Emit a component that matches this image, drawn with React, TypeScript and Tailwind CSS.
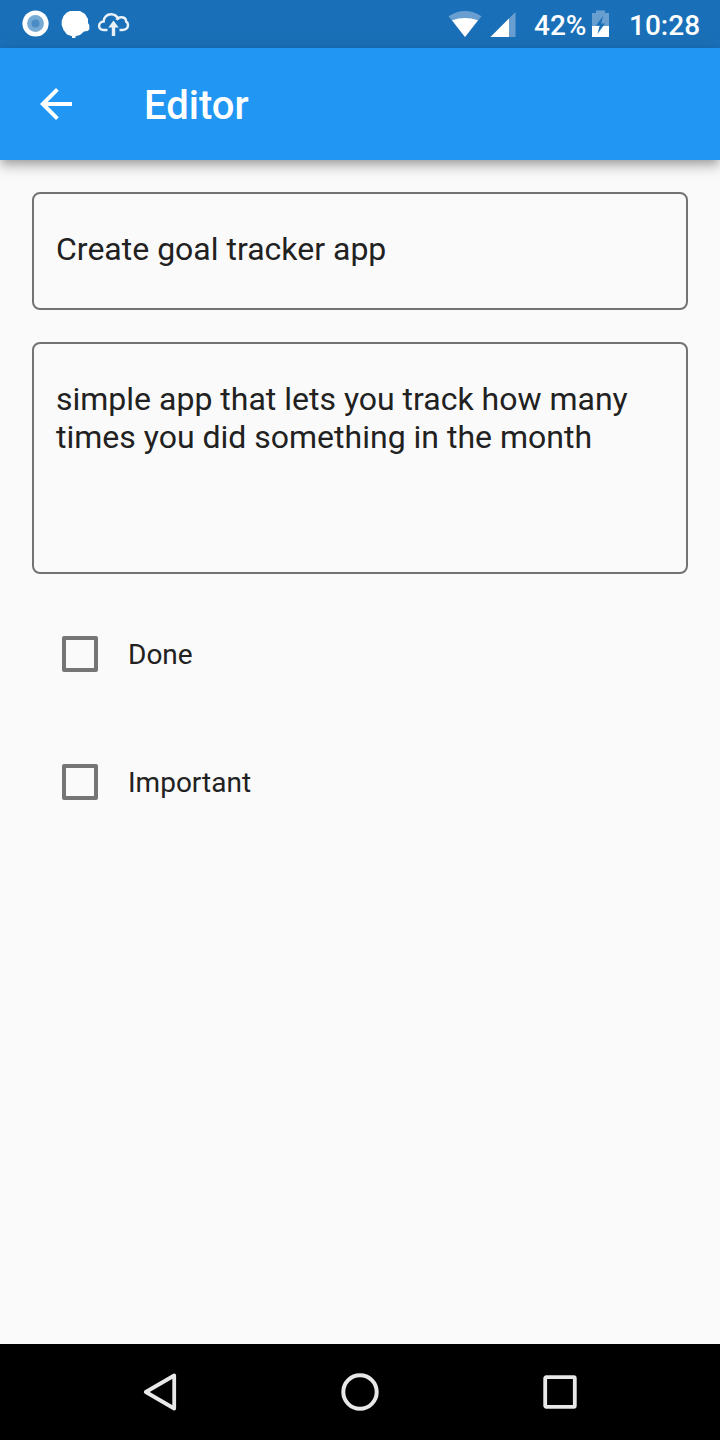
import React, { useState } from "react";

function StatusBar() {
  return (
    <div className="flex h-12 shrink-0 items-center bg-[#1a70b8] text-white">
      <svg className="h-12 w-[140px]" viewBox="0 0 140 48" fill="none">
        <circle cx="35.5" cy="23.5" r="13.1" fill="#fff" />
        <circle cx="35.5" cy="23.5" r="8.4" fill="#76a9d4" />
        <circle cx="35.5" cy="23.5" r="4" fill="#4a8dc6" />
        <path
          d="M70 11H80L85 14L88 19L88 23L89.300 25V29.500L87.500 31L84 31.500L80 35L75.500 36.300V38H72V36.300L67 34.500L63.500 30L61.700 25V21L63.500 16L66.500 12.700Z"
          fill="#fff"
        />
        <path
          d="M107.500 30H103.500C100.900 30 99.100 28.300 99.100 26C99.100 23.500 101.100 21.700 103.600 21.500C103.600 17.500 106.900 14.300 111 14.300C114.500 14.300 117.300 16.500 118.300 19.800M116.500 19.800C117.500 18.200 119.200 17.300 121.200 17.300C124 17.300 126 19 126.200 21.600C127.400 22.300 128 23.500 128 25C128 28 125.600 30 122.500 30H119.500"
          stroke="#e8f0f8"
          strokeWidth="2.500"
        />
        <path d="M113.500 20.500l5.200 7h-3.500V36h-3.400v-8.500h-3.500z" fill="#e8f0f8" />
      </svg>
      <div className="flex-1" />
      <svg className="h-12 w-[90px]" viewBox="440 0 90 48">
        <path d="M448.500 16.200Q465 5.800 481.500 16.200L465 37z" fill="#699fd0" />
        <path d="M452 20.300Q465 15.500 478 20.300L465 37z" fill="#fff" />
        <path d="M515.500 12v25H490.500z" fill="#699fd0" />
        <path d="M509 18.500V37H490.500z" fill="#fff" />
      </svg>
      <span className="mt-1 w-[58px] pl-1 text-[28px] leading-none font-medium">42%</span>
      <svg className="h-12 w-[26px]" viewBox="588 0 26 48">
        <path d="M592 13h4v-2.500h9V13h4v14h-17z" fill="#699fd0" />
        <path d="M592 26h17v11h-17z" fill="#fff" />
        <path d="M603 16l-7 9.500h3.700L597.500 34l7.500-10.500h-3.800z" fill="#1a70b8" />
      </svg>
      <span className="mt-1 w-[106px] pl-[15px] text-[28px] leading-none font-medium">10:28</span>
    </div>
  );
}

function AppBar() {
  return (
    <header className="z-10 flex h-28 shrink-0 items-center bg-[#2196f3] text-white shadow-[0_4px_8px_-2px_rgba(0,0,0,0.2),0_8px_10px_0_rgba(0,0,0,0.14),0_2px_20px_0_rgba(0,0,0,0.12)]">
      <button className="flex w-28 justify-center" aria-label="Back">
        <svg className="size-12" viewBox="0 0 24 24" fill="currentColor">
          <path d="M20 11H7.830l5.590-5.590L12 4l-8 8 8 8 1.410-1.410L7.830 13H20v-2z" />
        </svg>
      </button>
      <h1 className="pt-1 pl-8 text-[40px] leading-[48px] font-medium">Editor</h1>
    </header>
  );
}

function Field({ text, size }: { text: string; size: string }) {
  return (
    <div
      className={`${size} rounded-lg border-2 border-[#737373] px-[22px] pt-9 text-[32px] leading-[38px] whitespace-pre-line`}
    >
      {text}
    </div>
  );
}

function CheckRow({ label }: { label: string }) {
  const [on, setOn] = useState(false);
  return (
    <label className="flex h-32 items-center gap-[30px] pl-[30px]">
      <button
        role="checkbox"
        aria-checked={on}
        aria-label={label}
        onClick={() => setOn(!on)}
        className={`size-9 rounded-[2px] border-4 border-[#757575] ${on ? "bg-[#2196f3]" : ""}`}
      />
      <span className="pt-0.5 text-[28px] leading-8">{label}</span>
    </label>
  );
}

function NavBar() {
  return (
    <nav className="flex h-24 shrink-0 items-center justify-center gap-[152px] bg-black">
      <svg className="size-12" viewBox="0 0 48 48" fill="none" stroke="#e8e8e8" strokeWidth="3.800" strokeLinejoin="round">
        <path d="M9.800 24L38.200 7.500v33z" />
      </svg>
      <svg className="size-12" viewBox="0 0 48 48" fill="none" stroke="#e8e8e8" strokeWidth="4">
        <circle cx="24" cy="24" r="16.700" />
      </svg>
      <svg className="size-12" viewBox="0 0 48 48" fill="none" stroke="#e8e8e8" strokeWidth="3.800">
        <rect x="9.200" y="9.200" width="29.600" height="29.600" rx="1" />
      </svg>
    </nav>
  );
}

export default function App() {
  return (
    <div className="flex h-[1440px] w-[720px] flex-col bg-[#fafafa] font-[Roboto,sans-serif] text-[#212121]">
      <StatusBar />
      <AppBar />
      <main className="flex flex-1 flex-col px-8 pt-8">
        <Field text="Create goal tracker app" size="h-[118px]" />
        <div className="h-8" />
        <Field
          text={"simple app that lets you track how many\ntimes you did something in the month"}
          size="h-[232px]"
        />
        <div className="pt-4">
          <CheckRow label="Done" />
          <CheckRow label="Important" />
        </div>
      </main>
      <NavBar />
    </div>
  );
}
